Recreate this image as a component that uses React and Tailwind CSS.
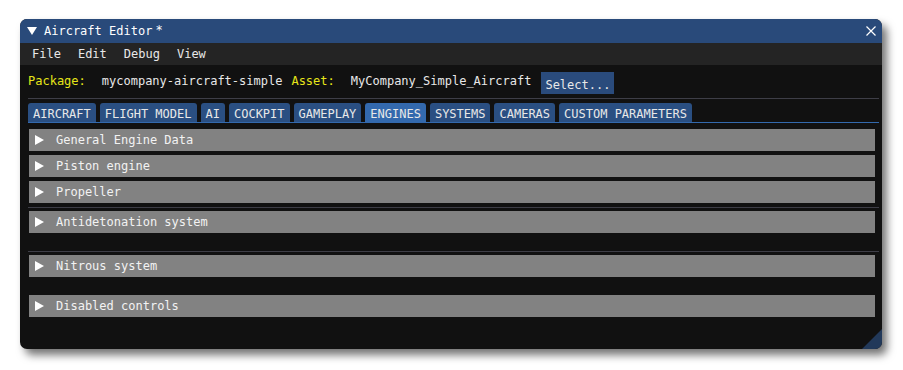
export default function App() {
  const tabs = [
    "AIRCRAFT",
    "FLIGHT MODEL",
    "AI",
    "COCKPIT",
    "GAMEPLAY",
    "ENGINES",
    "SYSTEMS",
    "CAMERAS",
    "CUSTOM PARAMETERS",
  ];

  const Header = ({ label, className = "" }) => (
    <div
      className={`h-[22px] ml-[1px] mr-[4px] bg-[#828282] flex items-center pl-[6px] ${className}`}
    >
      <svg width="9" height="10" viewBox="0 0 9 10" className="shrink-0">
        <polygon points="0,0 9,5 0,10" fill="#ffffff" />
      </svg>
      <span className="ml-[12px] text-[#f2f2f2]">{label}</span>
    </div>
  );

  return (
    <div className="w-[903px] h-[370px] bg-white pt-[19px] pl-[20px]">
      <div className="relative w-[862px] h-[330px] rounded-[7px] overflow-hidden bg-[#111111] shadow-[5px_6px_9px_rgba(0,0,0,0.55)] flex flex-col font-['DejaVu_Sans_Mono',monospace] text-[12px] leading-[14px] text-[#e8e8e8]">
        {/* Title bar */}
        <div className="h-[24px] shrink-0 bg-[#294a7a] flex items-center pl-[7px] pr-[6px]">
          <svg width="10" height="8" viewBox="0 0 10 8" className="shrink-0">
            <polygon points="0,0 10,0 5,8" fill="#ffffff" />
          </svg>
          <span className="ml-[7px] text-white">Aircraft Editor</span>
          <span className="ml-[3px] -mt-[3px] text-white">*</span>
          <div className="flex-1" />
          <svg width="10" height="10" viewBox="0 0 10 10" className="shrink-0">
            <path d="M0.5 0.5 L9.5 9.5 M9.5 0.5 L0.5 9.5" stroke="#ffffff" strokeWidth="1.2" />
          </svg>
        </div>

        {/* Menu bar */}
        <div className="h-[22px] shrink-0 bg-[#242424] flex items-center pl-[12px] gap-[17px]">
          <span>File</span>
          <span>Edit</span>
          <span>Debug</span>
          <span>View</span>
        </div>

        {/* Content */}
        <div className="flex flex-col pl-[8px] pr-[3px]">
          {/* Package row */}
          <div className="mt-[7px] flex items-start">
            <span className="mt-[2px] text-[#e6e619]">Package:</span>
            <span className="mt-[2px] ml-[16px]">mycompany-aircraft-simple</span>
            <span className="mt-[2px] ml-[9px] text-[#e6e619]">Asset:</span>
            <span className="mt-[2px] ml-[16px]">MyCompany_Simple_Aircraft</span>
            <div className="ml-[10px] h-[22px] px-[4px] bg-[#2a4b7c] flex items-center pt-[3px]">
              Select...
            </div>
          </div>

          {/* Separator */}
          <div className="mt-[4px] h-px bg-[#3e3e47]" />

          {/* Tabs */}
          <div className="mt-[4px] flex gap-[4px]">
            {tabs.map((t) => (
              <div
                key={t}
                className={`h-[19px] px-[5px] pt-[4px] rounded-t-[3px] ${
                  t === "ENGINES" ? "bg-[#3369ad]" : "bg-[#2a4f82]"
                }`}
              >
                {t}
              </div>
            ))}
          </div>
          <div className="h-px bg-[#3369ad]" />

          {/* Headers */}
          <div className="mt-[6px] flex flex-col gap-[4px]">
            <Header label="General Engine Data" />
            <Header label="Piston engine" />
            <Header label="Propeller" />
          </div>
          <div className="mt-[4px] h-px bg-[#3e3e47]" />
          <Header label="Antidetonation system" className="mt-[3px]" />
          <div className="mt-[18px] h-px bg-[#3e3e47]" />
          <Header label="Nitrous system" className="mt-[3px]" />
          <Header label="Disabled controls" className="mt-[18px]" />
        </div>

        {/* Resize grip */}
        <svg
          width="20"
          height="20"
          viewBox="0 0 20 20"
          className="absolute right-0 bottom-0"
        >
          <polygon points="20,0 20,20 0,20" fill="#22395a" />
        </svg>
      </div>
    </div>
  );
}
